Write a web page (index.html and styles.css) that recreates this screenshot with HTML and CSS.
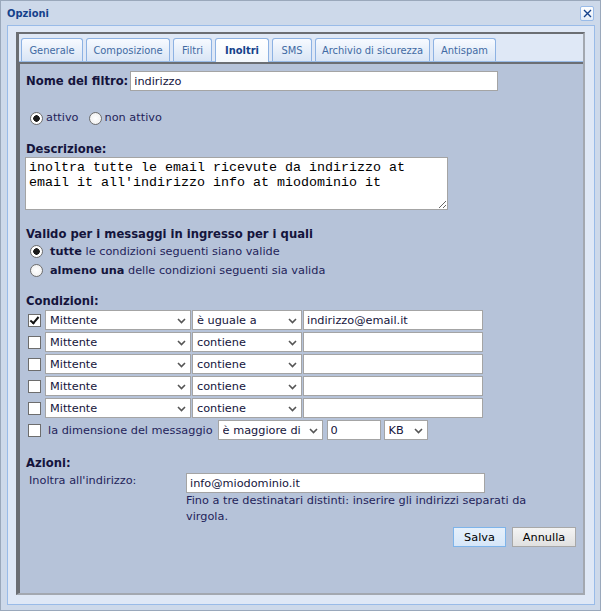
FILE: index.html
```html
<!DOCTYPE html>
<html lang="it">
<head>
    <meta charset="UTF-8">
    <meta name="viewport" content="width=device-width, initial-scale=1.0">
    <link rel="stylesheet" href="styles.css">
    <title>Opzioni</title>
</head>
<body>

<div class="window">
    <div class="titlebar">
        <span class="title">Opzioni</span>
        <span class="close">
            <svg width="9" height="9" viewBox="0 0 9 9"><path d="M1 1L8 8M8 1L1 8" stroke="#15428b" stroke-width="1.4" fill="none"/></svg>
        </span>
    </div>

    <div class="frame">
        <div class="tabpanel">
            <div class="tabs">
                <span class="tab">Generale</span>
                <span class="tab">Composizione</span>
                <span class="tab">Filtri</span>
                <span class="tab active">Inoltri</span>
                <span class="tab">SMS</span>
                <span class="tab">Archivio di sicurezza</span>
                <span class="tab">Antispam</span>
            </div>

            <div class="content">
                <div class="name-row">
                    <label class="bold" for="nome">Nome del filtro:</label>
                    <input type="text" id="nome" class="text name-input" value="indirizzo">
                </div>

                <div class="state-row">
                    <label class="radio-label"><input type="radio" name="stato" checked>attivo</label>
                    <label class="radio-label"><input type="radio" name="stato">non attivo</label>
                </div>

                <div class="heading desc-title">Descrizione:</div>
                <textarea class="desc">inoltra tutte le email ricevute da indirizzo at email it all'indirizzo info at miodominio it</textarea>

                <div class="heading valid">Valido per i messaggi in ingresso per i quali</div>
                <div class="match">
                    <label class="match-label"><input type="radio" name="match" checked><span><b>tutte</b> le condizioni seguenti siano valide</span></label>
                    <label class="match-label"><input type="radio" name="match"><span><b>almeno una</b> delle condizioni seguenti sia valida</span></label>
                </div>

                <div class="heading cond-title">Condizioni:</div>
                <div class="conditions">
                    <div class="cond-row">
                        <input type="checkbox" checked>
                        <span class="select sel-field"><select><option>Mittente</option></select><svg class="chev" width="9" height="6" viewBox="0 0 9 6"><path d="M1 1l3.5 3.5L8 1" stroke="#555" stroke-width="1.6" fill="none"/></svg></span>
                        <span class="select sel-op"><select><option>è uguale a</option></select><svg class="chev" width="9" height="6" viewBox="0 0 9 6"><path d="M1 1l3.5 3.5L8 1" stroke="#555" stroke-width="1.6" fill="none"/></svg></span>
                        <input type="text" class="text cond-value" value="indirizzo@email.it">
                    </div>
                    <div class="cond-row">
                        <input type="checkbox">
                        <span class="select sel-field"><select><option>Mittente</option></select><svg class="chev" width="9" height="6" viewBox="0 0 9 6"><path d="M1 1l3.5 3.5L8 1" stroke="#555" stroke-width="1.6" fill="none"/></svg></span>
                        <span class="select sel-op"><select><option>contiene</option></select><svg class="chev" width="9" height="6" viewBox="0 0 9 6"><path d="M1 1l3.5 3.5L8 1" stroke="#555" stroke-width="1.6" fill="none"/></svg></span>
                        <input type="text" class="text cond-value">
                    </div>
                    <div class="cond-row">
                        <input type="checkbox">
                        <span class="select sel-field"><select><option>Mittente</option></select><svg class="chev" width="9" height="6" viewBox="0 0 9 6"><path d="M1 1l3.5 3.5L8 1" stroke="#555" stroke-width="1.6" fill="none"/></svg></span>
                        <span class="select sel-op"><select><option>contiene</option></select><svg class="chev" width="9" height="6" viewBox="0 0 9 6"><path d="M1 1l3.5 3.5L8 1" stroke="#555" stroke-width="1.6" fill="none"/></svg></span>
                        <input type="text" class="text cond-value">
                    </div>
                    <div class="cond-row">
                        <input type="checkbox">
                        <span class="select sel-field"><select><option>Mittente</option></select><svg class="chev" width="9" height="6" viewBox="0 0 9 6"><path d="M1 1l3.5 3.5L8 1" stroke="#555" stroke-width="1.6" fill="none"/></svg></span>
                        <span class="select sel-op"><select><option>contiene</option></select><svg class="chev" width="9" height="6" viewBox="0 0 9 6"><path d="M1 1l3.5 3.5L8 1" stroke="#555" stroke-width="1.6" fill="none"/></svg></span>
                        <input type="text" class="text cond-value">
                    </div>
                    <div class="cond-row">
                        <input type="checkbox">
                        <span class="select sel-field"><select><option>Mittente</option></select><svg class="chev" width="9" height="6" viewBox="0 0 9 6"><path d="M1 1l3.5 3.5L8 1" stroke="#555" stroke-width="1.6" fill="none"/></svg></span>
                        <span class="select sel-op"><select><option>contiene</option></select><svg class="chev" width="9" height="6" viewBox="0 0 9 6"><path d="M1 1l3.5 3.5L8 1" stroke="#555" stroke-width="1.6" fill="none"/></svg></span>
                        <input type="text" class="text cond-value">
                    </div>
                    <div class="cond-row size-row">
                        <input type="checkbox">
                        <span class="size-label">la dimensione del messaggio</span>
                        <span class="select sel-size"><select><option>è maggiore di</option></select><svg class="chev" width="9" height="6" viewBox="0 0 9 6"><path d="M1 1l3.5 3.5L8 1" stroke="#555" stroke-width="1.6" fill="none"/></svg></span>
                        <input type="text" class="text size-value" value="0">
                        <span class="select sel-unit"><select><option>KB</option></select><svg class="chev" width="9" height="6" viewBox="0 0 9 6"><path d="M1 1l3.5 3.5L8 1" stroke="#555" stroke-width="1.6" fill="none"/></svg></span>
                    </div>
                </div>

                <div class="heading actions-title">Azioni:</div>
                <div class="forward">
                    <label class="forward-label" for="dest">Inoltra all'indirizzo:</label>
                    <div>
                        <input type="text" id="dest" class="text dest-input" value="info@miodominio.it">
                        <p class="hint">Fino a tre destinatari distinti: inserire gli indirizzi separati da virgola.</p>
                    </div>
                </div>

                <div class="buttons">
                    <button class="btn btn-save">Salva</button>
                    <button class="btn">Annulla</button>
                </div>
            </div>
        </div>
    </div>
</div>

</body>
</html>
```

FILE: styles.css
```css
body {
    margin: 0;
    font-family: "DejaVu Sans", Verdana, sans-serif;
    font-size: 11.3px;
    color: #1f1f5a;
}

/* Fenêtre */
.window {
    width: 601px;
    height: 611px;
    box-sizing: border-box;
    border: 1px solid #9aa8bb;
    background-color: #cdd9ea;
    display: flex;
    flex-direction: column;
}

.titlebar {
    height: 24px;
    display: flex;
    align-items: center;
    justify-content: space-between;
    padding: 0 6px 0 6px;
}

.title {
    font-family: "DejaVu Sans Condensed", "DejaVu Sans", sans-serif;
    font-weight: bold;
    font-size: 11px;
    color: #15428b;
}

.close {
    width: 14px;
    height: 15px;
    box-sizing: border-box;
    border: 1px solid #99bbe8;
    border-radius: 2px;
    background: linear-gradient(#ffffff, #e3ecf8);
    display: flex;
    align-items: center;
    justify-content: center;
}

.frame {
    flex: 1;
    margin: 0 5px 5px 6px;
    border: 1px solid #99bbe8;
    background-color: #dfe8f6;
    padding: 6px 9px 9px 8px;
    display: flex;
}

/* Onglets */
.tabpanel {
    flex: 1;
    display: flex;
    flex-direction: column;
    border-style: solid;
    border-width: 2px 2px 2px 3px;
    border-color: #6b6e73 #a3a8b0 #a3a8b0 #6b6e73;
}

.tabs {
    display: flex;
    gap: 3px;
    padding: 4px 0 0 2px;
    background-color: #dfe8f6;
    border-bottom: 1px solid #99bbe8;
}

.tab {
    height: 23px;
    box-sizing: border-box;
    border: 1px solid #8db2e3;
    border-bottom: none;
    border-radius: 3px 3px 0 0;
    background: linear-gradient(#f7faff, #d9e5f5);
    color: #416aa3;
    font-family: "DejaVu Sans Condensed", "DejaVu Sans", sans-serif;
    font-size: 11px;
    display: flex;
    align-items: center;
    justify-content: center;
}

/* Largeurs fixes des onglets */
.tab:nth-child(1) { width: 62px; }
.tab:nth-child(2) { width: 84px; }
.tab:nth-child(3) { width: 39px; }
.tab:nth-child(4) { width: 54px; }
.tab:nth-child(5) { width: 40px; }
.tab:nth-child(6) { width: 115px; }
.tab:nth-child(7) { width: 63px; }

.tab.active {
    height: 24px;
    margin-bottom: -1px;
    background: linear-gradient(#ffffff, #f4f8fd);
    color: #15428b;
    font-weight: bold;
}

.content {
    flex: 1;
    background-color: #b6c3d9;
    border-top: 2px solid #6b6e73;
    border-left: 1px solid #6b6e73;
    padding: 7px 7px 0 6px;
}

/* Champs */
.bold,
.heading {
    font-weight: bold;
    font-size: 11.6px;
    color: #14143c;
}

.heading {
    line-height: 16px;
}

.text {
    box-sizing: border-box;
    height: 20px;
    border: 1px solid #a4a4a4;
    background-color: #fff;
    font-family: inherit;
    font-size: 11.3px;
    color: #14143c;
    padding: 0 3px;
    outline: none;
}

.name-row {
    display: flex;
    align-items: center;
    gap: 2px;
}

.name-input {
    width: 368px;
}

.state-row {
    display: flex;
    align-items: center;
    gap: 10px;
    line-height: 16px;
    margin-top: 19px;
    padding-left: 4px;
}

.radio-label,
.match-label {
    display: flex;
    align-items: center;
    gap: 3px;
}

input[type="radio"] {
    appearance: none;
    -webkit-appearance: none;
    width: 13px;
    height: 13px;
    margin: 0;
    border: 1px solid #6d6d6d;
    border-radius: 50%;
    background: radial-gradient(#ffffff, #ececec);
    box-sizing: border-box;
}

input[type="radio"]:checked {
    background: radial-gradient(circle, #1a1a1a 0 3px, #ffffff 3.5px);
}

input[type="checkbox"] {
    appearance: none;
    -webkit-appearance: none;
    width: 13px;
    height: 13px;
    margin: 0;
    border: 1px solid #6d6d6d;
    background-color: #fff;
    box-sizing: border-box;
    position: relative;
}

/* Coche dessinée avec deux bordures */
input[type="checkbox"]:checked::after {
    content: "";
    position: absolute;
    left: 3px;
    top: 0;
    width: 3px;
    height: 7px;
    border: solid #111;
    border-width: 0 2px 2px 0;
    transform: rotate(40deg);
}

.desc-title {
    margin-top: 15px;
}

.desc {
    display: block;
    box-sizing: border-box;
    width: 423px;
    height: 53px;
    margin: 0 0 0 -1px;
    border: 1px solid #a4a4a4;
    padding: 2px 3px;
    font-family: "Liberation Mono", monospace;
    font-size: 13.33px;
    line-height: 15px;
    color: #000;
    outline: none;
}

.valid {
    margin-top: 16px;
}

.match {
    padding-left: 4px;
}

.match-label {
    line-height: 19px;
    gap: 7px;
}

.match-label b {
    color: #14143c;
}

.cond-title {
    margin-top: 13px;
}

.conditions {
    margin-top: 1px;
    display: flex;
    flex-direction: column;
    gap: 2px;
}

.cond-row {
    display: flex;
    align-items: center;
    height: 20px;
    padding-left: 2px;
}

.cond-row input[type="checkbox"] {
    margin-right: 4px;
}

.select {
    position: relative;
    display: inline-block;
    height: 20px;
}

.select select {
    appearance: none;
    -webkit-appearance: none;
    width: 100%;
    height: 20px;
    box-sizing: border-box;
    border: 1px solid #a4a4a4;
    border-radius: 0;
    background-color: #fff;
    font-family: inherit;
    font-size: 11.3px;
    color: #14143c;
    padding: 0 16px 0 4px;
    outline: none;
}

.chev {
    position: absolute;
    right: 5px;
    top: 8px;
    pointer-events: none;
}

.sel-field {
    width: 146px;
}

.sel-op {
    width: 110px;
    margin-left: 1px;
}

.cond-value {
    width: 180px;
    margin-left: 1px;
}

.size-row input[type="checkbox"] {
    margin-right: 7px;
}

.size-label {
    margin-right: 5px;
}

.sel-size {
    width: 105px;
}

.size-value {
    width: 54px;
    margin-left: 4px;
}

.sel-unit {
    width: 44px;
    margin-left: 3px;
}

.actions-title {
    margin-top: 15px;
}

.forward {
    display: grid;
    grid-template-columns: 160px 1fr;
    margin-top: 2px;
}

.forward-label {
    padding-left: 3px;
    line-height: 16px;
}

.dest-input {
    display: block;
    width: 299px;
}

.hint {
    margin: 0;
    width: 360px;
    line-height: 16px;
}

.buttons {
    display: flex;
    justify-content: flex-end;
    gap: 6px;
    margin-top: 2px;
}

.btn {
    height: 20px;
    padding: 0;
    width: 64px;
    border: 1px solid #a8a8a8;
    background: linear-gradient(#f4f4f4, #e0e0e0);
    font-family: inherit;
    font-size: 11.3px;
    color: #000;
}

.btn-save {
    width: 53px;
    border-color: #7eb4ea;
    background: linear-gradient(#e6f0fb, #d6e6f8);
}
```
